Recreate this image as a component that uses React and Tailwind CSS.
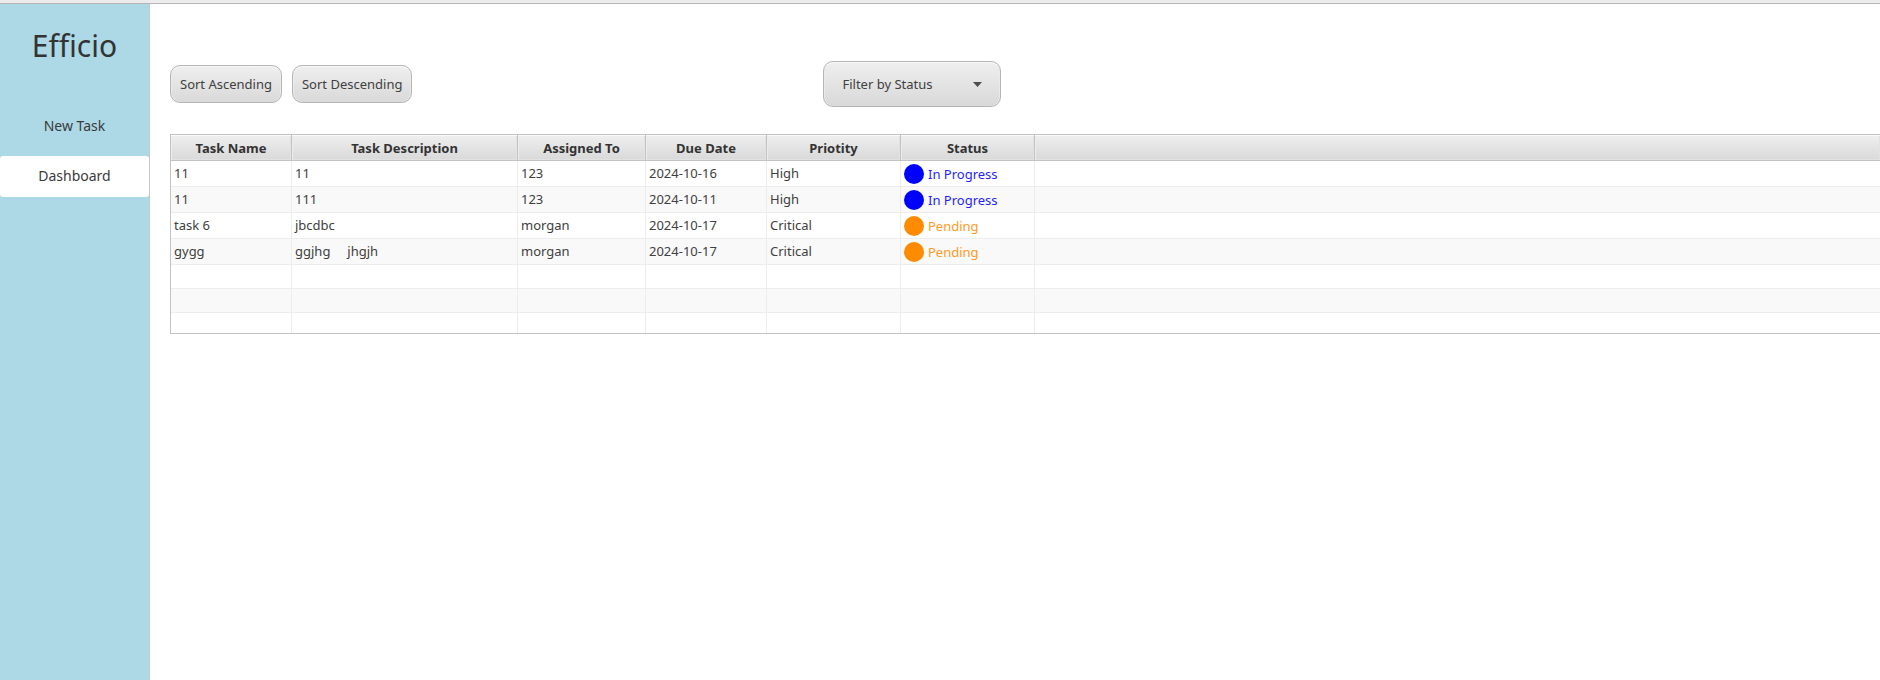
import { useState } from "react";

const tasks = [
  { name: "11", description: "11", assignee: "123", due: "2024-10-16", priority: "High", status: "In Progress" },
  { name: "11", description: "111", assignee: "123", due: "2024-10-11", priority: "High", status: "In Progress" },
  { name: "task 6", description: "jbcdbc", assignee: "morgan", due: "2024-10-17", priority: "Critical", status: "Pending" },
  { name: "gygg", description: "ggjhg     jhgjh", assignee: "morgan", due: "2024-10-17", priority: "Critical", status: "Pending" },
];

const headers = ["Task Name", "Task Description", "Assigned To", "Due Date", "Priotity", "Status", ""];

const statusStyles = {
  "In Progress": { dot: "bg-[#0000ff]", text: "text-[#1f1fff]" },
  Pending: { dot: "bg-[#ff8c00]", text: "text-[#ff9a1f]" },
};

const surface =
  "rounded-[10px] border border-[#b5b5b5] bg-linear-to-b from-[#efefef] to-[#d9d9d9] pt-0.5 text-[13px] text-[#404040] shadow-[inset_0_1px_0_#f8f8f8,inset_1px_0_0_#eaeaea,inset_-1px_0_0_#eaeaea]";

function SortButton({ children, onClick }) {
  return (
    <button type="button" onClick={onClick} className={`h-[38px] px-[9px] ${surface}`}>
      {children}
    </button>
  );
}

function StatusFilter({ value, onChange }) {
  return (
    <div className="relative ml-[401px]">
      <select
        aria-label="Filter by Status"
        value={value}
        onChange={(e) => onChange(e.target.value)}
        className={`block h-[46px] w-[178px] appearance-none pl-[18px] pr-8 ${surface}`}
      >
        <option value="">Filter by Status</option>
        <option>In Progress</option>
        <option>Pending</option>
      </select>
      <svg viewBox="0 0 9 5" className="pointer-events-none absolute top-[21px] right-[19px] h-[5px] w-[9px] fill-[#4d4d4d]">
        <path d="M0 0h9L4.5 5z" />
      </svg>
    </div>
  );
}

function NavButton({ active, children }) {
  return (
    <button
      type="button"
      aria-current={active ? "page" : undefined}
      className={`h-[41px] w-full rounded-[3px] pb-0.5 text-[14px] text-[#3a3a3a] ${active ? "bg-white" : ""}`}
    >
      {children}
    </button>
  );
}

function Cell({ children }) {
  return (
    <td className="border-r border-b border-[#ededed] px-[3px] pb-0.5 whitespace-pre last:border-r-0">{children}</td>
  );
}

function StatusCell({ status }) {
  return (
    <td className="border-r border-b border-[#ededed] px-[3px]">
      <span className={`flex items-center gap-1 ${statusStyles[status].text}`}>
        <span className={`size-5 rounded-full ${statusStyles[status].dot}`} />
        {status}
      </span>
    </td>
  );
}

function TaskTable({ rows }) {
  return (
    <table className="w-full table-fixed border-separate border-spacing-0 border-t border-b border-l border-[#c3c3c3] text-[13px] text-[#404040]">
      <colgroup>
        <col className="w-[121px]" />
        <col className="w-[226px]" />
        <col className="w-[128px]" />
        <col className="w-[121px]" />
        <col className="w-[134px]" />
        <col className="w-[134px]" />
        <col />
      </colgroup>
      <thead>
        <tr className="h-[26px]">
          {headers.map((label) => (
            <th
              key={label}
              className="border-r border-b border-[#c3c3c3] bg-linear-to-b from-[#efefef] to-[#d9d9d9] p-0 leading-5 font-bold text-[#333333] shadow-[inset_0_1px_0_#fafafa,inset_1px_0_0_#ececec,inset_-1px_-1px_0_#e2e2e2] last:border-r-0"
            >
              {label}
            </th>
          ))}
        </tr>
      </thead>
      <tbody>
        {rows.map((task, i) => (
          <tr key={i} className="h-[26px] leading-5 even:bg-[#f9f9f9]">
            <Cell>{task.name}</Cell>
            <Cell>{task.description}</Cell>
            <Cell>{task.assignee}</Cell>
            <Cell>{task.due}</Cell>
            <Cell>{task.priority}</Cell>
            <StatusCell status={task.status} />
            <Cell />
          </tr>
        ))}
        {[0, 1, 2].map((i) => (
          <tr key={`empty-${i}`} className="h-6 even:bg-[#f9f9f9] last:h-5 last:*:border-b-0">
            {headers.map((label) => (
              <Cell key={label} />
            ))}
          </tr>
        ))}
      </tbody>
    </table>
  );
}

export default function App() {
  const [order, setOrder] = useState(null);
  const [status, setStatus] = useState("");

  let rows = tasks.filter((task) => !status || task.status === status);
  if (order) {
    rows = [...rows].sort((a, b) => order * a.due.localeCompare(b.due));
  }

  return (
    <div className="flex min-h-screen flex-col bg-white font-['Noto_Sans',sans-serif]">
      <div className="h-1 border-b border-[#b5b5b5] bg-[#ececec]" />
      <div className="flex flex-1">
        <aside className="w-[150px] shrink-0 border-r border-[#c8c8c8] bg-[#add8e6] pt-5">
          <h1 className="text-center text-[30px] leading-[44px] text-[#333333]">Efficio</h1>
          <nav className="mt-[38px] flex flex-col gap-[9px]">
            <NavButton>New Task</NavButton>
            <NavButton active>Dashboard</NavButton>
          </nav>
        </aside>
        <main className="min-w-0 flex-1 pt-[57px] pl-5">
          <div className="flex items-center gap-[10px]">
            <SortButton onClick={() => setOrder(1)}>Sort Ascending</SortButton>
            <SortButton onClick={() => setOrder(-1)}>Sort Descending</SortButton>
            <StatusFilter value={status} onChange={setStatus} />
          </div>
          <div className="mt-[27px]">
            <TaskTable rows={rows} />
          </div>
        </main>
      </div>
    </div>
  );
}
